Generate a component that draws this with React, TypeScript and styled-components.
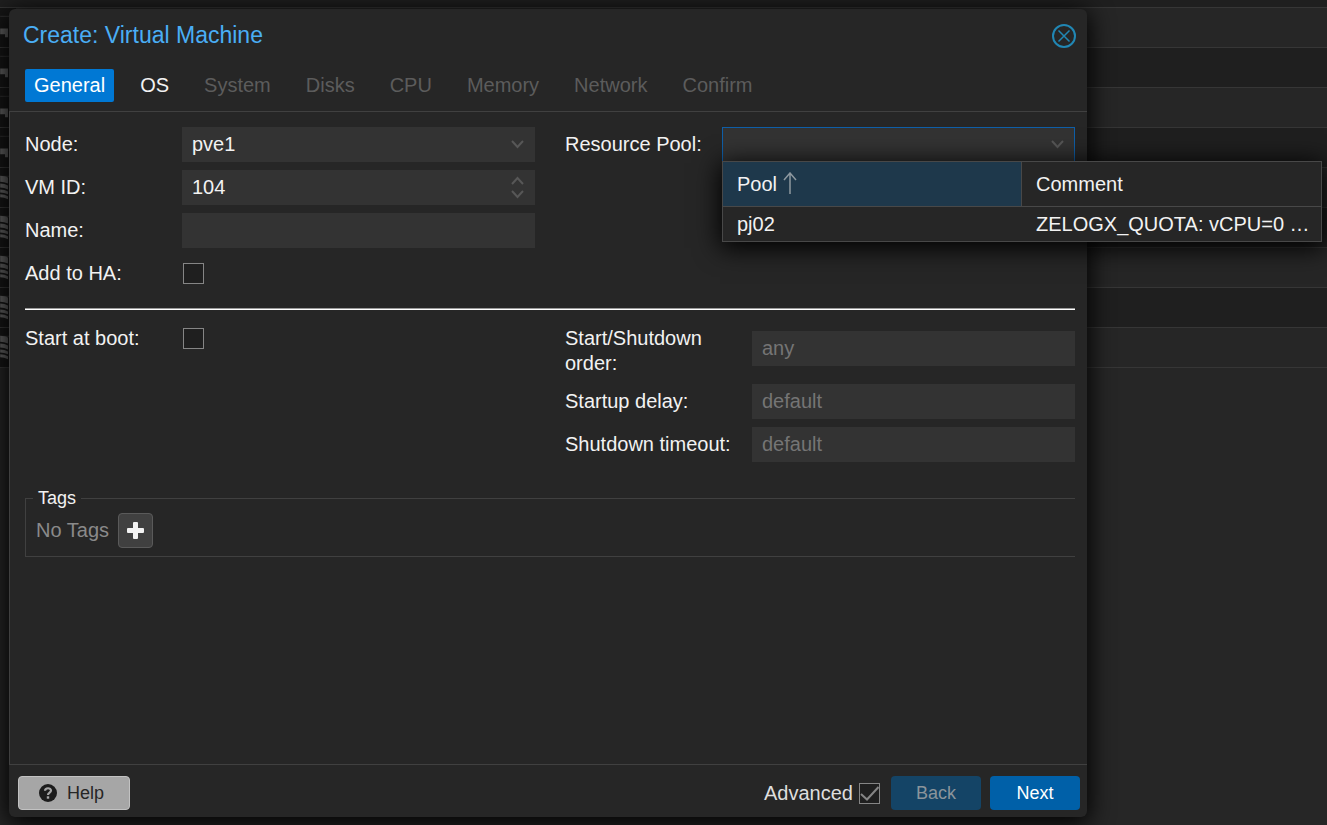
import React, { useState } from "react";
import styled, { createGlobalStyle } from "styled-components";

const color = {
  panel: "#262626",
  panelAlt: "#1f1f1f",
  field: "#333333",
  line: "#404040",
  text: "#f2f2f2",
  muted: "#757575",
  disabled: "#5c5c5c",
  focus: "#0f5fa8",
};

const GlobalStyle = createGlobalStyle`
  * { box-sizing: border-box; }
  body {
    margin: 0;
    background: ${color.panel};
    color: ${color.text};
    font-family: "Liberation Sans", Arial, Helvetica, sans-serif;
    font-size: 20px;
    line-height: 25px;
  }
  button, input, select { font: inherit; color: inherit; margin: 0; }
`;

const Page = styled.div`
  position: relative;
  display: flex;
  flex-direction: column;
  min-height: 100vh;
  overflow: hidden;
`;

const Backdrop = styled.div`
  position: absolute;
  inset: 0;
  overflow: hidden;
`;

const BackdropRow = styled.div<{ $first?: boolean; $alt?: boolean }>`
  display: flex;
  height: ${(p) => (p.$first ? 8 : 40)}px;
  border-bottom: 1px solid #363636;
  background: ${(p) => (p.$alt ? color.panelAlt : color.panel)};
`;

const RowIcon = styled.svg`
  width: 16px;
  height: 100%;
  background: #161616;
  fill: #626262;
`;

const Overlay = styled.div`
  position: relative;
  display: flex;
  flex: 1;
  padding: 9px 240px 8px 9px;
`;

const Dialog = styled.section`
  display: flex;
  flex: 1;
  flex-direction: column;
  min-width: 0;
  border-radius: 6px;
  background: ${color.panel};
  box-shadow: 0 4px 24px 2px #000;
`;

const TitleBar = styled.header`
  display: flex;
  align-items: center;
  justify-content: space-between;
  height: 52px;
  padding: 1px 11px 0 14px;
`;

const Title = styled.h1`
  margin: 0;
  color: #4aaef5;
  font-size: 23px;
  font-weight: 400;
`;

const CloseButton = styled.button`
  display: flex;
  padding: 0;
  border: 0;
  background: none;
  color: #2187b4;
`;

const Tabs = styled.nav`
  display: flex;
  gap: 17px;
  padding: 8px 16px 9px;
`;

const Tab = styled.button<{ $active?: boolean }>`
  height: 33px;
  padding: 0 9px;
  border: 0;
  border-radius: 2px;
  background: ${(p) => (p.$active ? "#0078d4" : "transparent")};
  color: ${(p) => (p.$active ? "#ffffff" : color.text)};
  &:disabled { color: ${color.disabled}; }
`;

const Body = styled.form`
  display: flex;
  flex: 1;
  flex-direction: column;
  padding: 15px 12px 15px 15px;
  border: solid ${color.line};
  border-width: 1px 0 1px 1px;
`;

const Columns = styled.div`
  display: grid;
  grid-template-columns: 1fr 1fr;
  gap: 30px;
`;

const Column = styled.div`
  display: flex;
  flex-direction: column;
  gap: 8px;
  min-width: 0;
`;

const Divider = styled.hr`
  width: 100%;
  height: 2px;
  margin: 17px 0 11px;
  border: 0;
  border-top: 1px solid #9a9a9a;
  background: #ffffff;
`;

const Row = styled.div`
  display: flex;
  align-items: center;
`;

const Label = styled.label<{ $wide?: boolean }>`
  flex: none;
  align-self: flex-start;
  width: ${(p) => (p.$wide ? 187 : 157)}px;
  padding: 5px 0 0;
`;

const Control = styled.div`
  position: relative;
  display: flex;
  flex: 1;
  min-width: 0;
`;

const fieldCss = `
  width: 100%;
  height: 35px;
  padding: 0 10px;
  border: 0;
  border-radius: 0;
  outline: 0;
  background: ${color.field};
  appearance: none;
`;

const TextField = styled.input`
  ${fieldCss}
  -moz-appearance: textfield;
  &::-webkit-inner-spin-button { display: none; }
  &::placeholder { color: ${color.muted}; opacity: 1; }
`;

const SelectField = styled.select<{ $open?: boolean }>`
  ${fieldCss}
  border: ${(p) => (p.$open ? `1px solid ${color.focus}` : "0")};
`;

const Trigger = styled.svg`
  position: absolute;
  top: 0;
  right: 10px;
  width: 15px;
  height: 35px;
  fill: none;
  stroke: #575757;
  stroke-width: 2;
  pointer-events: none;
`;

const CheckInput = styled.input`
  flex: none;
  width: 21px;
  height: 21px;
  border: 1px solid #858585;
  background: #1f1f1f;
  appearance: none;
`;

const FormCheck = styled(CheckInput)`
  margin: 7px 1px;
`;

const CheckWrap = styled.span`
  position: relative;
  display: flex;
  svg {
    position: absolute;
    inset: 0;
    pointer-events: none;
  }
`;

const Picker = styled.div`
  position: absolute;
  z-index: 2;
  top: 34px;
  left: 0;
  width: 600px;
  border: 1px solid #484848;
  background: ${color.panel};
  box-shadow: 0 4px 24px 2px #000;
`;

const PoolTable = styled.table`
  width: 100%;
  table-layout: fixed;
  border-spacing: 0;
`;

const HeadCell = styled.th<{ $sorted?: boolean }>`
  height: 45px;
  padding: 0 14px;
  border-bottom: 1px solid #484848;
  border-right: ${(p) => (p.$sorted ? "1px solid #484848" : "0")};
  background: ${(p) => (p.$sorted ? "#1e384b" : color.panel)};
  font-weight: 400;
  text-align: left;
  svg { margin-left: 6px; vertical-align: -3px; }
`;

const Cell = styled.td`
  height: 34px;
  padding: 0 0 0 14px;
  white-space: nowrap;
`;

const TagSet = styled.fieldset`
  min-width: 0;
  margin: 26px 0 0;
  padding: 5px 7px 8px;
  border: 1px solid ${color.line};
  border-right: 0;
`;

const Legend = styled.legend`
  padding: 0 5px;
  font-size: 18px;
  line-height: 20px;
`;

const TagRow = styled.div`
  display: flex;
  align-items: center;
  gap: 9px;
  padding-left: 3px;
  color: #8a8a8a;
`;

const AddTag = styled.button`
  display: grid;
  place-items: center;
  width: 35px;
  height: 35px;
  padding: 0;
  border: 1px solid #5a5a5a;
  border-radius: 4px;
  background: #404040;
`;

const Footer = styled.footer`
  display: flex;
  align-items: center;
  padding: 11px 7px 7px 9px;
`;

const AdvancedLabel = styled.label`
  display: flex;
  align-items: center;
  gap: 6px;
  margin: 0 11px 0 auto;
  color: #dedede;
`;

const FooterButton = styled.button<{ $kind: "help" | "primary" }>`
  display: flex;
  align-items: center;
  justify-content: ${(p) => (p.$kind === "help" ? "flex-start" : "center")};
  gap: 10px;
  width: ${(p) => (p.$kind === "help" ? 112 : 90)}px;
  height: 34px;
  padding: ${(p) => (p.$kind === "help" ? "0 0 0 20px" : "0")};
  border: ${(p) => (p.$kind === "help" ? "1px solid #c2c2c2" : "0")};
  border-radius: 4px;
  background: ${(p) => (p.$kind === "help" ? "#a6a6a6" : "#0060a8")};
  color: ${(p) => (p.$kind === "help" ? "#262626" : "#ffffff")};
  font-size: 18px;
  & + & { margin-left: 9px; }
  &:disabled { background: #144466; color: #8b949b; }
`;

const tabs = ["General", "OS", "System", "Disks", "CPU", "Memory", "Network", "Confirm"];
const backdropRows = ["vm", "vm", "vm", "vm", "db", "db", "db", "db", "db"];

const Down = () => (
  <Trigger viewBox="0 0 15 35"><path d="M2 14l5.500 6 5.500-6" /></Trigger>
);

export default function App() {
  const [advanced, setAdvanced] = useState(true);
  return (
    <>
      <GlobalStyle />
      <Page>
        <Backdrop aria-hidden="true">
          <BackdropRow $first $alt />
          {backdropRows.map((kind, i) => (
            <BackdropRow key={i} $alt={i % 2 === 1}>
              <RowIcon viewBox="0 0 16 40">
                <path d="M0 8h16v1H0z" fill="#333333" />
                {kind === "vm" ? (
                  <path d="M0 21h8v9H5v-3H0z" />
                ) : (
                  <path d="M0 8q6 0 8 2v6q-4-2-8-2zM0 16q5 0 8 2v4q-4-2-8-2zM0 22q5 0 8 2v3q-4-2-8-2zM0 27q5 0 8 2v3q-4-2-8-2z" />
                )}
              </RowIcon>
            </BackdropRow>
          ))}
        </Backdrop>
        <Overlay>
          <Dialog role="dialog" aria-labelledby="dialog-title">
            <TitleBar>
              <Title id="dialog-title">Create: Virtual Machine</Title>
              <CloseButton type="button" aria-label="Close">
                <svg width="24" height="24" viewBox="0 0 24 24" fill="none" stroke="currentColor">
                  <circle cx="12" cy="12" r="11" strokeWidth="2" />
                  <path d="M6.500 6.500l11 11M17.500 6.500l-11 11" strokeWidth="1.500" />
                </svg>
              </CloseButton>
            </TitleBar>
            <Tabs>
              {tabs.map((name, i) => (
                <Tab key={name} type="button" $active={i === 0} disabled={i > 1}>{name}</Tab>
              ))}
            </Tabs>
            <Body>
              <Columns>
                <Column>
                  <Row>
                    <Label htmlFor="node">Node:</Label>
                    <Control>
                      <SelectField id="node"><option>pve1</option></SelectField>
                      <Down />
                    </Control>
                  </Row>
                  <Row>
                    <Label htmlFor="vmid">VM ID:</Label>
                    <Control>
                      <TextField id="vmid" type="number" defaultValue={104} />
                      <Trigger viewBox="0 0 15 35">
                        <path d="M2 14l5.500-6 5.500 6M2 21l5.500 6 5.500-6" />
                      </Trigger>
                    </Control>
                  </Row>
                  <Row>
                    <Label htmlFor="name">Name:</Label>
                    <Control><TextField id="name" type="text" /></Control>
                  </Row>
                  <Row>
                    <Label htmlFor="ha">Add to HA:</Label>
                    <FormCheck id="ha" type="checkbox" />
                  </Row>
                </Column>
                <Column>
                  <Row>
                    <Label htmlFor="pool">Resource Pool:</Label>
                    <Control>
                      <SelectField id="pool" $open><option></option></SelectField>
                      <Down />
                      <Picker>
                        <PoolTable>
                          <thead>
                            <tr>
                              <HeadCell $sorted>
                                Pool
                                <svg width="14" height="22" viewBox="0 0 14 22" fill="none" stroke="#8e989f" strokeWidth="1.500">
                                  <path d="M7 22V1M1 8l6-7 6 7" />
                                </svg>
                              </HeadCell>
                              <HeadCell>Comment</HeadCell>
                            </tr>
                          </thead>
                          <tbody>
                            <tr>
                              <Cell>pj02</Cell>
                              <Cell>ZELOGX_QUOTA: vCPU=0 …</Cell>
                            </tr>
                          </tbody>
                        </PoolTable>
                      </Picker>
                    </Control>
                  </Row>
                </Column>
              </Columns>
              <Divider />
              <Columns>
                <Column>
                  <Row>
                    <Label htmlFor="boot">Start at boot:</Label>
                    <FormCheck id="boot" type="checkbox" />
                  </Row>
                </Column>
                <Column>
                  <Row>
                    <Label $wide htmlFor="order">Start/Shutdown order:</Label>
                    <Control><TextField id="order" type="text" placeholder="any" /></Control>
                  </Row>
                  <Row>
                    <Label $wide htmlFor="delay">Startup delay:</Label>
                    <Control><TextField id="delay" type="text" placeholder="default" /></Control>
                  </Row>
                  <Row>
                    <Label $wide htmlFor="timeout">Shutdown timeout:</Label>
                    <Control><TextField id="timeout" type="text" placeholder="default" /></Control>
                  </Row>
                </Column>
              </Columns>
              <TagSet>
                <Legend>Tags</Legend>
                <TagRow>
                  No Tags
                  <AddTag type="button" aria-label="Add tag">
                    <svg width="19" height="19" viewBox="0 0 19 19" fill="#f2f2f2">
                      <path d="M8 1h3q1 0 1 1v5h5q1 0 1 1v3q0 1-1 1h-5v5q0 1-1 1H8q-1 0-1-1v-5H2q-1 0-1-1V8q0-1 1-1h5V2q0-1 1-1z" />
                    </svg>
                  </AddTag>
                </TagRow>
              </TagSet>
            </Body>
            <Footer>
              <FooterButton type="button" $kind="help">
                <svg width="18" height="18" viewBox="0 0 18 18" fill="none">
                  <circle cx="9" cy="9" r="9" fill="#1c1c1c" />
                  <path d="M6 6.800C6.200 3.400 12 3.500 12 6.600C12 8.600 9 8.500 9 11" stroke="#a6a6a6" strokeWidth="2.200" />
                  <path d="M9 12.300v2.400" stroke="#a6a6a6" strokeWidth="2.400" />
                </svg>
                Help
              </FooterButton>
              <AdvancedLabel>
                Advanced
                <CheckWrap>
                  <CheckInput type="checkbox" checked={advanced} onChange={() => setAdvanced(!advanced)} />
                  {advanced && (
                    <svg width="21" height="21" viewBox="0 0 21 21" fill="none" stroke="#858585" strokeWidth="2">
                      <path d="M2 11l6 5.500L19.500 4" />
                    </svg>
                  )}
                </CheckWrap>
              </AdvancedLabel>
              <FooterButton type="button" $kind="primary" disabled>Back</FooterButton>
              <FooterButton type="button" $kind="primary">Next</FooterButton>
            </Footer>
          </Dialog>
        </Overlay>
      </Page>
    </>
  );
}
